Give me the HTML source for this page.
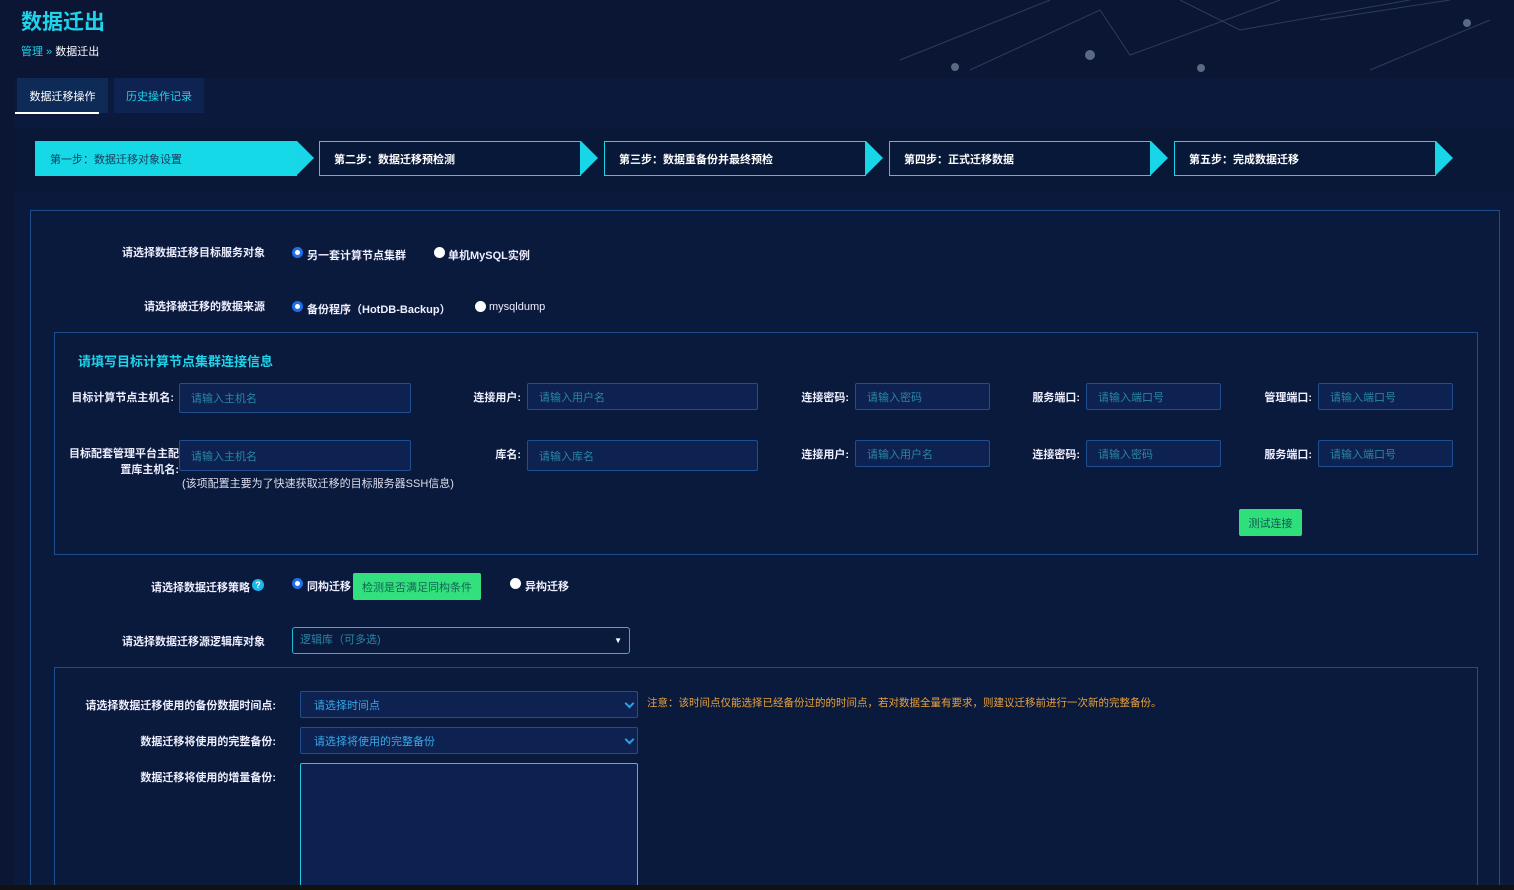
<!DOCTYPE html>
<html style="width:1514px;height:890px;overflow:hidden"><head><meta charset="utf-8"><style>
*{margin:0;padding:0;box-sizing:border-box}
body{width:1514px;height:890px;overflow:hidden;background:#0a1633;font-family:"Liberation Sans","Noto Sans CJK SC",sans-serif;color:#fff;position:relative;font-size:11px}
.a{position:absolute}
.lbl{position:absolute;text-align:right;font-size:11px;color:#eef;font-weight:bold;white-space:nowrap}
.inp{position:absolute;background:#0d2250;border:1px solid #1f4f90;border-radius:2px;color:#2a86a6;font-size:11px;padding-left:11px;display:flex;align-items:center}
.step{position:absolute;top:141px;height:35px;border:1px solid #18d6e8;background:#081838;font-size:11px;font-weight:bold;padding-left:14px;display:flex;align-items:center}
.tip{position:absolute;top:141px;width:0;height:0;border-top:17.5px solid transparent;border-bottom:17.5px solid transparent;border-left:17px solid #18d6e8}
.rad{position:absolute;width:11px;height:11px;border-radius:50%;background:#fff}
.rad.on{border:3px solid #1f6fe8}
.rt{position:absolute;font-size:11px;font-weight:bold;color:#eef;white-space:nowrap}
.chev{position:absolute;right:4px;top:8px;width:7px;height:7px;border-right:2px solid #2aa0e8;border-bottom:2px solid #2aa0e8;transform:rotate(45deg)}
</style></head><body>
<svg class="a" style="left:850px;top:0" width="664" height="80"><g stroke="#3a4d70" stroke-width="1" fill="none" opacity=".7"><path d="M50 60 L200 0 M120 70 L250 10 L280 55 L430 0 M330 0 L390 30 L560 0 M470 20 L600 0 M520 70 L640 20"/></g><g fill="#5a6a85"><circle cx="240" cy="55" r="5"/><circle cx="105" cy="67" r="4"/><circle cx="351" cy="68" r="4"/><circle cx="617" cy="23" r="4"/></g></svg>
<div class="a" style="left:21px;top:6px;font-size:21px;color:#1fd3ea;font-weight:bold">数据迁出</div>
<div class="a" style="left:21px;top:43px;font-size:11px"><span style="color:#1fd3ea">管理 »</span> 数据迁出</div>
<div class="a" style="left:14px;top:78px;width:1500px;height:807px;background:#0b1a3c"></div>
<div class="a" style="left:17px;top:78px;width:91px;height:35px;background:#0e2b58;display:flex;align-items:center;justify-content:center">数据迁移操作</div>
<div class="a" style="left:15px;top:112px;width:84px;height:2px;background:#fff"></div>
<div class="a" style="left:114px;top:78px;width:90px;height:35px;background:#0f2352;color:#1fd3ea;display:flex;align-items:center;justify-content:center">历史操作记录</div>
<div class="a" style="left:14px;top:128px;width:1500px;height:64px;background:#0a1838"></div>
<div class="step" style="left:35px;width:262px;background:#16d9e8;color:#1a3a5a;font-weight:normal">第一步：数据迁移对象设置</div><div class="tip" style="left:297px"></div>
<div class="step" style="left:319px;width:262px">第二步：数据迁移预检测</div><div class="tip" style="left:581px"></div>
<div class="step" style="left:604px;width:262px">第三步：数据重备份并最终预检</div><div class="tip" style="left:866px"></div>
<div class="step" style="left:889px;width:262px">第四步：正式迁移数据</div><div class="tip" style="left:1151px"></div>
<div class="step" style="left:1174px;width:262px">第五步：完成数据迁移</div><div class="tip" style="left:1436px"></div>
<div class="a" style="left:30px;top:210px;width:1470px;height:675px;border:1px solid #1f4d8c;border-bottom:none;background:#0a1a3c"></div>
<div class="lbl" style="right:1249px;top:244px">请选择数据迁移目标服务对象</div>
<div class="rad on" style="left:292px;top:247px"></div><div class="rt" style="left:307px;top:247px">另一套计算节点集群</div>
<div class="rad" style="left:434px;top:247px"></div><div class="rt" style="left:448px;top:247px">单机MySQL实例</div>
<div class="lbl" style="right:1249px;top:298px">请选择被迁移的数据来源</div>
<div class="rad on" style="left:292px;top:301px"></div><div class="rt" style="left:307px;top:301px">备份程序（HotDB-Backup）</div>
<div class="rad" style="left:475px;top:301px"></div><div class="rt" style="left:489px;top:301px;font-weight:normal">mysqldump</div>
<div class="a" style="left:54px;top:332px;width:1424px;height:223px;border:1px solid #1f4d8c"></div>
<div class="a" style="left:78px;top:351px;font-size:13px;font-weight:bold;color:#1fd3ea">请填写目标计算节点集群连接信息</div>
<div class="lbl" style="right:1340px;top:389px">目标计算节点主机名:</div><div class="inp" style="left:179px;top:383px;width:232px;height:30px">请输入主机名</div>
<div class="lbl" style="right:993px;top:389px">连接用户:</div><div class="inp" style="left:527px;top:383px;width:231px;height:27px">请输入用户名</div>
<div class="lbl" style="right:665px;top:389px">连接密码:</div><div class="inp" style="left:855px;top:383px;width:135px;height:27px">请输入密码</div>
<div class="lbl" style="right:434px;top:389px">服务端口:</div><div class="inp" style="left:1086px;top:383px;width:135px;height:27px">请输入端口号</div>
<div class="lbl" style="right:202px;top:389px">管理端口:</div><div class="inp" style="left:1318px;top:383px;width:135px;height:27px">请输入端口号</div>
<div class="lbl" style="right:1335px;top:446px;line-height:16px">目标配套管理平台主配<br>置库主机名:</div><div class="inp" style="left:179px;top:440px;width:232px;height:31px">请输入主机名</div>
<div class="lbl" style="right:993px;top:446px">库名:</div><div class="inp" style="left:527px;top:440px;width:231px;height:31px">请输入库名</div>
<div class="lbl" style="right:665px;top:446px">连接用户:</div><div class="inp" style="left:855px;top:440px;width:135px;height:27px">请输入用户名</div>
<div class="lbl" style="right:434px;top:446px">连接密码:</div><div class="inp" style="left:1086px;top:440px;width:135px;height:27px">请输入密码</div>
<div class="lbl" style="right:202px;top:446px">服务端口:</div><div class="inp" style="left:1318px;top:440px;width:135px;height:27px">请输入端口号</div>
<div class="a" style="left:182px;top:475px;color:#dde">(该项配置主要为了快速获取迁移的目标服务器SSH信息)</div>
<div class="a" style="left:1239px;top:509px;width:63px;height:27px;background:#2fe07a;border-radius:2px;color:#155;display:flex;align-items:center;justify-content:center">测试连接</div>
<div class="lbl" style="right:1264px;top:579px">请选择数据迁移策略</div>
<div class="a" style="left:252px;top:579px;width:12px;height:12px;border-radius:50%;background:#1fb8ea;color:#fff;font-size:9px;font-weight:bold;text-align:center;line-height:12px">?</div>
<div class="rad on" style="left:292px;top:578px"></div><div class="rt" style="left:307px;top:578px">同构迁移</div>
<div class="a" style="left:353px;top:573px;width:128px;height:27px;background:#33e07e;border-radius:2px;color:#165;display:flex;align-items:center;justify-content:center">检测是否满足同构条件</div>
<div class="rad" style="left:510px;top:578px"></div><div class="rt" style="left:525px;top:578px">异构迁移</div>
<div class="lbl" style="right:1249px;top:633px">请选择数据迁移源逻辑库对象</div>
<div class="a" style="left:292px;top:627px;width:338px;height:27px;border:1px solid #22b8d8;border-radius:3px;background:#0a1a3c;color:#2a86a6;padding-left:7px;line-height:25px">逻辑库（可多选)<span style="position:absolute;right:7px;color:#fff;font-size:8px">▼</span></div>
<div class="a" style="left:54px;top:667px;width:1424px;height:218px;border:1px solid #1f4d8c;border-bottom:none"></div>
<div class="lbl" style="right:1238px;top:697px">请选择数据迁移使用的备份数据时间点:</div>
<div class="inp" style="left:300px;top:691px;width:338px;height:27px;color:#3aa8e8;padding-left:13px">请选择时间点<span class="chev"></span></div>
<div class="a" style="left:647px;top:695px;color:#e8a23c;font-size:10.5px">注意：该时间点仅能选择已经备份过的的时间点，若对数据全量有要求，则建议迁移前进行一次新的完整备份。</div>
<div class="lbl" style="right:1238px;top:733px">数据迁移将使用的完整备份:</div>
<div class="inp" style="left:300px;top:727px;width:338px;height:27px;color:#3aa8e8;padding-left:13px">请选择将使用的完整备份<span class="chev"></span></div>
<div class="lbl" style="right:1238px;top:769px">数据迁移将使用的增量备份:</div>
<div class="a" style="left:300px;top:763px;width:338px;height:122px;border:1px solid #22c8e0;border-bottom:none;border-radius:2px 2px 0 0;background:#0c2150"></div>
<div class="a" style="left:0;top:885px;width:1514px;height:5px;background:#111"></div>
</body></html>
